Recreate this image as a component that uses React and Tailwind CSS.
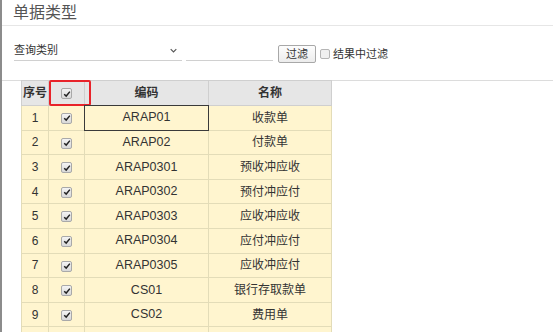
import React from "react";

const rows = [
  ["1", "ARAP01", "收款单"],
  ["2", "ARAP02", "付款单"],
  ["3", "ARAP0301", "预收冲应收"],
  ["4", "ARAP0302", "预付冲应付"],
  ["5", "ARAP0303", "应收冲应收"],
  ["6", "ARAP0304", "应付冲应付"],
  ["7", "ARAP0305", "应收冲应付"],
  ["8", "CS01", "银行存取款单"],
  ["9", "CS02", "费用单"],
];

const font = { fontFamily: '"Liberation Sans", "Noto Sans CJK SC", sans-serif' };

const Check = ({ checked = true }) => (
  <span className="inline-flex items-center justify-center w-[11px] h-[11px] rounded-[2px] border border-[#a9a9a9] bg-gradient-to-b from-[#f4f4f4] to-[#d8d8d8] align-middle">
    {checked && (
      <svg viewBox="0 0 10 10" className="w-[8px] h-[8px]">
        <path d="M1.5 5.2 L4 7.6 L8.6 2" fill="none" stroke="#222" strokeWidth="1.8" />
      </svg>
    )}
  </span>
);

export default function App() {
  return (
    <div className="w-[553px] h-[332px] overflow-hidden bg-white border-l-2 border-[#8c8c8c] text-[#333]" style={font}>
      {/* title */}
      <div className="h-[26px] border-b border-[#e6e6e6] pl-[11px] flex items-center">
        <span className="text-[16px] text-[#555] leading-none">单据类型</span>
      </div>

      {/* query bar */}
      <div className="flex items-end h-[36px] pl-[12px]">
        <div className="w-[168px] h-[20px] border-b border-[#d0d0d0] flex items-center justify-between pr-[5px] mb-[1px]">
          <span className="text-[11px] text-[#333]">查询类别</span>
          <svg viewBox="0 0 10 6" className="w-[7px] h-[5px]">
            <path d="M1 1 L5 5 L9 1" fill="none" stroke="#555" strokeWidth="1.6" />
          </svg>
        </div>
        <div className="ml-[4px] w-[87px] h-[20px] border-b border-[#d0d0d0] mb-[1px]" />
        <button className="ml-[5px] mb-[-1px] w-[38px] h-[18px] border border-[#a8a8a8] rounded-[2px] bg-gradient-to-b from-[#fdfdfd] to-[#ececec] text-[11px] text-[#333] leading-none">
          过滤
        </button>
        <div className="ml-[4px] flex items-center h-[18px] mb-[-1px]">
          <span className="w-[10px] h-[10px] border border-[#b5b5b5] rounded-[2px] bg-[#f0f0f0]" />
          <span className="ml-[3px] text-[11px] text-[#333]">结果中过滤</span>
        </div>
      </div>

      {/* grid */}
      <div className="mt-[18px] border-t border-[#dcdcdc] pl-[19px]">
        <table className="border-collapse text-[12px] text-[#333] -mt-px" style={{ tableLayout: "fixed" }}>
          <colgroup>
            <col className="w-[27px]" />
            <col className="w-[36px]" />
            <col className="w-[124px]" />
            <col className="w-[123px]" />
          </colgroup>
          <thead>
            <tr className="h-[25px] bg-[#e6e6e6]">
              <th className="border border-[#cfcfcf] font-bold text-[12px] p-0">序号</th>
              <th className="border border-[#cfcfcf] p-0 relative">
                <Check />
                <span className="absolute left-[0px] top-[-1px] w-[42px] h-[26px] border-2 border-[#e8232a] rounded-[2px]" />
              </th>
              <th className="border border-[#cfcfcf] font-bold p-0">编码</th>
              <th className="border border-[#cfcfcf] font-bold p-0">名称</th>
            </tr>
          </thead>
          <tbody>
            {rows.map(([n, code, name], i) => (
              <tr key={n} className="h-[24.6px] bg-[#fff5cf]">
                <td className="border border-[#e3dcb8] text-center p-0">{n}</td>
                <td className="border border-[#e3dcb8] text-center p-0 leading-none">
                  <Check />
                </td>
                <td className="border border-[#e3dcb8] text-center p-0 text-[12.5px] relative">
                  {code}
                  {i === 0 && (
                    <span className="absolute -left-px -top-px -right-px -bottom-px border border-[#3a3a3a]" />
                  )}
                </td>
                <td className="border border-[#e3dcb8] text-center p-0">{name}</td>
              </tr>
            ))}
            <tr className="h-[24.6px] bg-[#fff5cf]">
              <td className="border border-[#e3dcb8]" />
              <td className="border border-[#e3dcb8]" />
              <td className="border border-[#e3dcb8]" />
              <td className="border border-[#e3dcb8]" />
            </tr>
          </tbody>
        </table>
      </div>
    </div>
  );
}
